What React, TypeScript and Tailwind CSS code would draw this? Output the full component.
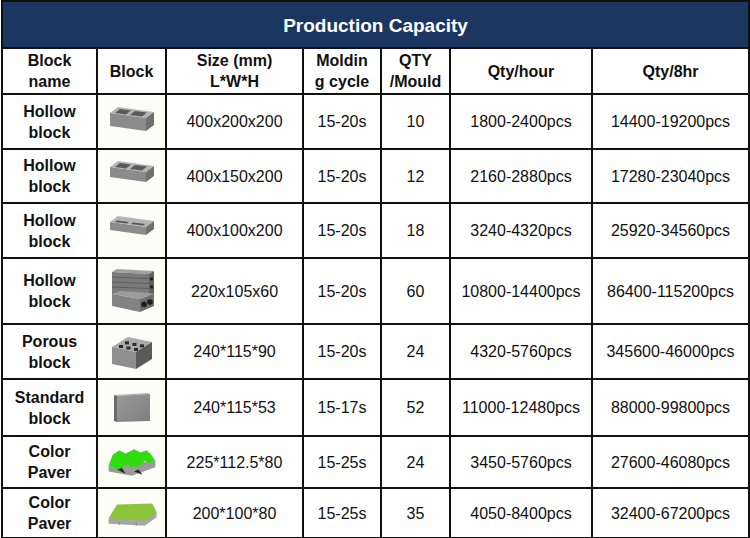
import React from 'react'

const FONT = { fontFamily: '"Liberation Sans", Arial, sans-serif' }

function HollowBlock({ h = 14, slot = false }: { h?: number; slot?: boolean }) {
  // oblique hollow block; h = front face height
  const t = 4
  const bottom = 12 + h
  return (
    <svg width="50" height="34" viewBox="0 0 50 34">
      <polygon points={`3,${t + 4} 11,${t - 2} 47,${t + 3} 39,${t + 9}`} fill="#b4b4b4" />
      <polygon points={`3,${t + 4} 39,${t + 9} 39,${bottom} 3,${bottom - 5}`} fill="#8b8b8b" />
      <polygon points={`39,${t + 9} 47,${t + 3} 47,${bottom - 6} 39,${bottom}`} fill="#6f6f6f" />
      {slot ? (
        <>
          <polygon points={`8,${t + 4} 10,${t + 2.5} 22,${t + 4} 20,${t + 5.5}`} fill="#555" />
          <polygon points={`24,${t + 6} 26,${t + 4.5} 38,${t + 6} 36,${t + 7.5}`} fill="#555" />
        </>
      ) : (
        <>
          <polygon points={`8,${t + 4} 13,${t} 24,${t + 1.5} 19,${t + 5.5}`} fill="#5a5a5a" />
          <polygon points={`23,${t + 6} 28,${t + 2} 40,${t + 3.5} 35,${t + 7.5}`} fill="#5a5a5a" />
        </>
      )}
    </svg>
  )
}

function StackBlock() {
  return (
    <svg width="48" height="46" viewBox="0 0 48 46">
      <polygon points="4,4 9,1 46,3 41,6" fill="#a0a0a0" />
      <polygon points="4,4 41,6 41,28 4,26" fill="#7b7b7b" />
      {[9, 14, 19].map(y => (
        <line key={y} x1="4" y1={y} x2="41" y2={y + 1.5} stroke="#5d5d5d" strokeWidth="1" />
      ))}
      <polygon points="41,6 46,3 46,26 41,28" fill="#606060" />
      <circle cx="43.5" cy="11" r="1.7" fill="#222" />
      <circle cx="43.5" cy="19" r="1.7" fill="#222" />
      <polygon points="4,26 12,23 41,25 46,26 32,31" fill="#9c9c9c" />
      <polygon points="4,26 32,31 32,44 4,38" fill="#838383" />
      <polygon points="32,31 46,26 46,38 32,44" fill="#6d6d6d" />
      <circle cx="36" cy="36.5" r="2.8" fill="#1e1e1e" />
      <circle cx="42" cy="34" r="2.8" fill="#1e1e1e" />
    </svg>
  )
}

function PorousBlock() {
  return (
    <svg width="44" height="38" viewBox="0 0 44 38">
      <polygon points="2,14 18,4 42,9 26,19" fill="#aaa" />
      <polygon points="2,14 26,19 26,36 2,31" fill="#8f8f8f" />
      <polygon points="26,19 42,9 42,26 26,36" fill="#5b5b5b" />
      {[0, 1, 2].map(i =>
        [0, 1].map(j => {
          const x = 9 + i * 7.5 + j * 6
          const y = 12 + i * 1.5 - j * 3.6
          return <rect key={`${i}${j}`} x={x} y={y} width="4" height="3" fill="#2a2a2a" />
        })
      )}
    </svg>
  )
}

function StandardBlock() {
  return (
    <svg width="42" height="32" viewBox="0 0 42 32">
      <defs>
        <linearGradient id="sb" x1="0" x2="1" y1="0" y2="1">
          <stop offset="0" stopColor="#9a9a9a" />
          <stop offset="1" stopColor="#7e7e7e" />
        </linearGradient>
      </defs>
      <polygon points="3,3 36,1 39,2 6,4" fill="#b5b5b5" />
      <polygon points="3,3 6,4 6,30 3,29" fill="#6a6a6a" />
      <polygon points="6,4 39,2 39,29 6,30" fill="url(#sb)" />
    </svg>
  )
}

function ZigPaver() {
  return (
    <svg width="58" height="36" viewBox="0 0 52 34">
      <polygon points="4,20 4,26 26,30 48,22 48,16" fill="#9a9a9a" />
      <polygon points="12,24 16,22 20,28" fill="#222" />
      <polygon points="28,26 32,24 36,29" fill="#222" />
      <polygon
        points="4,20 8,10 14,6 20,9 28,5 34,8 40,6 44,10 48,16 42,18 38,16 34,20 26,22 20,19 14,24"
        fill="#2fdc10"
      />
    </svg>
  )
}

function FlatPaver() {
  return (
    <svg width="58" height="32" viewBox="0 0 52 30">
      <polygon points="4,20 4,25 38,27 49,19 49,14" fill="#a6a6a6" />
      <line x1="14" y1="23" x2="14" y2="26" stroke="#888" />
      <line x1="30" y1="24" x2="30" y2="27" stroke="#888" />
      <polygon points="4,20 12,7 45,6 49,14 38,22" fill="#8cc43c" />
    </svg>
  )
}

const ROWS = [
  { name: ['Hollow', 'block'], img: <HollowBlock h={14} />, size: '400x200x200', cycle: '15-20s', qty: '10', hour: '1800-2400pcs', day: '14400-19200pcs', h: 'h-[55px]' },
  { name: ['Hollow', 'block'], img: <HollowBlock h={11} />, size: '400x150x200', cycle: '15-20s', qty: '12', hour: '2160-2880pcs', day: '17280-23040pcs', h: 'h-[54px]' },
  { name: ['Hollow', 'block'], img: <HollowBlock h={9} slot />, size: '400x100x200', cycle: '15-20s', qty: '18', hour: '3240-4320pcs', day: '25920-34560pcs', h: 'h-[55px]' },
  { name: ['Hollow', 'block'], img: <StackBlock />, size: '220x105x60', cycle: '15-20s', qty: '60', hour: '10800-14400pcs', day: '86400-115200pcs', h: 'h-[66px]' },
  { name: ['Porous', 'block'], img: <PorousBlock />, size: '240*115*90', cycle: '15-20s', qty: '24', hour: '4320-5760pcs', day: '345600-46000pcs', h: 'h-[55px]' },
  { name: ['Standard', 'block'], img: <StandardBlock />, size: '240*115*53', cycle: '15-17s', qty: '52', hour: '11000-12480pcs', day: '88000-99800pcs', h: 'h-[57px]' },
  { name: ['Color', 'Paver'], img: <ZigPaver />, size: '225*112.5*80', cycle: '15-25s', qty: '24', hour: '3450-5760pcs', day: '27600-46080pcs', h: 'h-[52px]' },
  { name: ['Color', 'Paver'], img: <FlatPaver />, size: '200*100*80', cycle: '15-25s', qty: '35', hour: '4050-8400pcs', day: '32400-67200pcs', h: 'h-[50px]' },
]

const cell = 'border-2 border-[#111] text-center align-middle p-0'

export default function App() {
  return (
    <div className="w-[750px] h-[538px] bg-white overflow-hidden" style={FONT}>
      <table className="table-fixed border-collapse w-[747px] ml-px text-[#111] text-[16px] leading-[21px]">
        <colgroup>
          <col className="w-[95px]" />
          <col className="w-[69px]" />
          <col className="w-[137px]" />
          <col className="w-[78px]" />
          <col className="w-[69px]" />
          <col className="w-[142px]" />
          <col className="w-[157px]" />
        </colgroup>
        <thead>
          <tr className="h-[47px]">
            <th colSpan={7} className={`${cell} bg-[#1b3761] text-white text-[19px] font-bold pt-[2px]`}>
              Production Capacity
            </th>
          </tr>
          <tr className="h-[46px] font-bold">
            <th className={cell}>Block<br />name</th>
            <th className={cell}>Block</th>
            <th className={cell}>Size (mm)<br />L*W*H</th>
            <th className={cell}>Moldin<br />g cycle</th>
            <th className={cell}>QTY<br />/Mould</th>
            <th className={cell}>Qty/hour</th>
            <th className={cell}>Qty/8hr</th>
          </tr>
        </thead>
        <tbody>
          {ROWS.map((r, i) => (
            <tr key={i} className={r.h}>
              <td className={`${cell} font-bold`}>{r.name[0]}<br />{r.name[1]}</td>
              <td className={`${cell} bg-[#fdfdf7]`}>
                <div className="flex items-center justify-center">{r.img}</div>
              </td>
              <td className={cell}>{r.size}</td>
              <td className={cell}>{r.cycle}</td>
              <td className={cell}>{r.qty}</td>
              <td className={cell}>{r.hour}</td>
              <td className={cell}>{r.day}</td>
            </tr>
          ))}
        </tbody>
      </table>
    </div>
  )
}
